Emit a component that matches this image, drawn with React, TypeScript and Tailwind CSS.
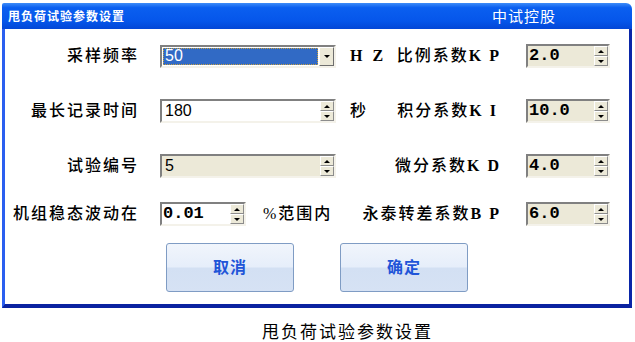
const CJK = "font-['Liberation_Serif','Noto_Sans_CJK_SC',serif]";

function Up({ down }: { down?: boolean }) {
  return (
    <div className="flex-1 flex items-center justify-center bg-[#ece9d8] border border-t-white border-l-white border-b-[#8c8c8c] border-r-[#8c8c8c]">
      <div
        className={
          down
            ? "w-0 h-0 border-l-[3px] border-r-[3px] border-t-[3px] border-l-transparent border-r-transparent border-t-black"
            : "w-0 h-0 border-l-[3px] border-r-[3px] border-b-[3px] border-l-transparent border-r-transparent border-b-black"
        }
      />
    </div>
  );
}

function Spin() {
  return (
    <div className="w-[14px] h-full flex flex-col shrink-0">
      <Up />
      <Up down />
    </div>
  );
}

function Box({
  value,
  width,
  bg,
  num,
}: {
  value: string;
  width: string;
  bg: string;
  num?: boolean;
}) {
  return (
    <div
      className={`${width} ${bg} shrink-0 h-[24px] flex border-2 border-t-[#808080] border-l-[#808080] border-b-[#f4f2ea] border-r-[#f4f2ea]`}
    >
      <div
        className={
          num
            ? "flex-1 flex items-center pl-[1px] text-[17px] font-bold text-black font-['Liberation_Mono',monospace]"
            : "flex-1 flex items-center pl-[3px] text-[16px] text-black font-['Liberation_Sans',sans-serif]"
        }
      >
        {value}
      </div>
      <Spin />
    </div>
  );
}

function Combo() {
  return (
    <div className="w-[176px] shrink-0 h-[23px] flex border-2 border-t-[#808080] border-l-[#808080] border-b-[#f4f2ea] border-r-[#f4f2ea] bg-white">
      <div className="flex-1 p-[1px]">
        <div className="h-full bg-[#316ac5] border border-dotted border-[#c8a040] flex items-center pl-[1px] text-[16px] text-white font-['Liberation_Sans',sans-serif]">
          50
        </div>
      </div>
      <div className="w-[15px] h-full flex items-center justify-center bg-[#ece9d8] border border-t-white border-l-white border-b-[#6e6e6e] border-r-[#6e6e6e]">
        <div className="w-0 h-0 border-l-[3px] border-r-[3px] border-t-[3px] border-l-transparent border-r-transparent border-t-black" />
      </div>
    </div>
  );
}

function Label({ text, latin }: { text: string; latin?: string }) {
  return (
    <div className={`shrink-0 text-[16px] font-medium tracking-[2px] text-black whitespace-nowrap ${CJK}`}>
      {text}
      {latin && <span className="font-bold">{latin}</span>}
    </div>
  );
}

function LeftLabel({ text }: { text: string }) {
  return (
    <div className="w-[134px] shrink-0 flex justify-end">
      <Label text={text} />
    </div>
  );
}

function Btn({ text }: { text: string }) {
  return (
    <div className="w-[128px] h-[49px] rounded-[3px] border border-[#7f9cc4] bg-[linear-gradient(#f1f5fc_0%,#e6eefa_48%,#d3e0f3_52%,#d6e2f4_100%)] flex items-center justify-center pb-[3px]">
      <span className="text-[16px] font-bold text-[#1f55d8] tracking-[1px] font-['Noto_Sans_CJK_SC',sans-serif]">{text}</span>
    </div>
  );
}

export default function App() {
  return (
    <div className="w-[635px] h-[342px] bg-white overflow-hidden">
      <div className="ml-[2px] pt-[3px] w-[630px]">
        <div className="h-[26px] rounded-tr-[6px] rounded-tl-[2px] bg-[linear-gradient(#3d8cf8_0%,#0b5ff0_18%,#0556ea_70%,#0347d6_100%)] flex items-center justify-between pl-[6px] pr-[76px]">
          <span className="text-[12px] font-bold text-white tracking-[1px] font-['Noto_Sans_CJK_SC',sans-serif]">
            甩负荷试验参数设置
          </span>
          <span className="text-[15px] text-white tracking-[1px] font-['Noto_Sans_CJK_SC',sans-serif]">中试控股</span>
        </div>
        <div className="h-[279px] bg-white border-l-[3px] border-l-[#2a5ff0] border-r-[3px] border-r-[#0a26a8] border-b-[4px] border-b-[#0a22a0] flex flex-col">
          <div className="mt-[15px] h-[24px] flex items-center">
            <LeftLabel text="采样频率" />
            <div className="ml-[21px] shrink-0">
              <Combo />
            </div>
            <div className={`ml-[14px] shrink-0 whitespace-nowrap text-[16px] font-bold tracking-[3px] ${CJK}`}>H Z</div>
            <div className="flex-1" />
            <Label text="比例系数" latin="K P" />
            <div className="ml-[25px] shrink-0">
              <Box value="2.0" width="w-[84px]" bg="bg-[#ece9d8]" num />
            </div>
            <div className="w-[19px] shrink-0" />
          </div>

          <div className="mt-[31px] h-[24px] flex items-center">
            <LeftLabel text="最长记录时间" />
            <div className="ml-[21px] shrink-0">
              <Box value="180" width="w-[176px]" bg="bg-white" />
            </div>
            <div className={`ml-[14px] shrink-0 text-[16px] font-medium ${CJK}`}>秒</div>
            <div className="flex-1" />
            <Label text="积分系数" latin="K I" />
            <div className="ml-[28px] shrink-0">
              <Box value="10.0" width="w-[84px]" bg="bg-[#ece9d8]" num />
            </div>
            <div className="w-[19px] shrink-0" />
          </div>

          <div className="mt-[31px] h-[24px] flex items-center">
            <LeftLabel text="试验编号" />
            <div className="ml-[21px] shrink-0">
              <Box value="5" width="w-[176px]" bg="bg-[#ece9d8]" />
            </div>
            <div className="flex-1" />
            <Label text="微分系数" latin="K D" />
            <div className="ml-[25px] shrink-0">
              <Box value="4.0" width="w-[84px]" bg="bg-[#ece9d8]" num />
            </div>
            <div className="w-[19px] shrink-0" />
          </div>

          <div className="mt-[24px] h-[24px] flex items-center">
            <LeftLabel text="机组稳态波动在" />
            <div className="ml-[21px] shrink-0">
              <Box value="0.01" width="w-[86px]" bg="bg-white" num />
            </div>
            <div className={`ml-[17px] shrink-0 whitespace-nowrap text-[16px] font-medium tracking-[2px] ${CJK}`}>%范围内</div>
            <div className="flex-1" />
            <Label text="永泰转差系数" latin="B P" />
            <div className="ml-[25px] shrink-0">
              <Box value="6.0" width="w-[84px]" bg="bg-[#ece9d8]" num />
            </div>
            <div className="w-[19px] shrink-0" />
          </div>

          <div className="mt-[17px] flex gap-[46px] pl-[161px]">
            <Btn text="取消" />
            <Btn text="确定" />
          </div>
        </div>
      </div>
      <div className="mt-[10px] pl-[60px] text-center text-[17px] tracking-[2px] text-black font-['Noto_Sans_CJK_SC',sans-serif]">
        甩负荷试验参数设置
      </div>
    </div>
  );
}
